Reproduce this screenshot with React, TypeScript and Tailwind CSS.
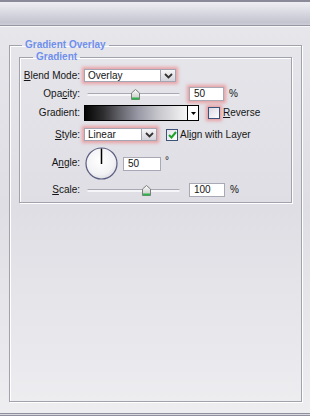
import React from "react";

function Chevron() {
  return (
    <svg width="9" height="6" viewBox="0 0 9 6">
      <path d="M1 1 L4.5 4.5 L8 1" fill="none" stroke="#333" strokeWidth="1.8" />
    </svg>
  );
}

function Select({ value, width }: { value: string; width: string }) {
  return (
    <div
      className={`flex h-[13px] ${width} items-stretch border border-[#a4a4b2] bg-white shadow-[0_0_3px_2px_rgba(238,110,110,0.55)]`}
    >
      <span className="flex-1 pl-[3px] leading-[11px]">{value}</span>
      <span className="flex w-[15px] items-center justify-center border-l border-[#a4a4b2] bg-linear-to-b from-[#f6f6f8] to-[#d4d4dc]">
        <Chevron />
      </span>
    </div>
  );
}

function Slider({ pos }: { pos: number }) {
  return (
    <div className="relative flex h-[13px] w-[96px] items-center pl-[3px]">
      <div className="h-[3px] w-full rounded-full border-t border-[#a9a9b3] bg-[#f6f6f8]" />
      {/* thumb */}
      <svg
        className="absolute top-[1px]"
        style={{ left: pos }}
        width="9"
        height="11"
        viewBox="0 0 9 11"
      >
        <defs>
          <linearGradient id="th" x1="0" y1="0" x2="0" y2="1">
            <stop offset="0" stopColor="#fbfbfb" />
            <stop offset="1" stopColor="#c4c8c4" />
          </linearGradient>
        </defs>
        <path d="M4.5 0.5 L8.5 4 L8.5 10.5 L0.5 10.5 L0.5 4 Z" fill="url(#th)" stroke="#7b7f7b" />
        <rect x="1" y="8.5" width="7" height="2" fill="#2fb24a" />
      </svg>
    </div>
  );
}

function Input({ value, width, glow }: { value: string; width: string; glow?: boolean }) {
  return (
    <div
      className={`flex h-[14px] ${width} items-center border border-[#a9a9b5] bg-white pl-[4px] ${
        glow ? "shadow-[0_0_3px_2px_rgba(238,110,110,0.55)]" : ""
      }`}
    >
      {value}
    </div>
  );
}

function Label({ children }: { children: React.ReactNode }) {
  return <span className="w-[60px] shrink-0 text-right">{children}</span>;
}

export default function App() {
  return (
    <div className="flex h-[416px] w-[310px] flex-col overflow-hidden bg-linear-to-b from-[#e7e7ec] via-[#dedee4] to-[#eeeef1] font-['Liberation_Sans',Arial,sans-serif] text-[10px] leading-[12px] text-[#151515]">
      {/* top bar */}
      <div className="h-[2px] shrink-0 bg-[#8a8a98]" />
      <div className="h-[23px] shrink-0 bg-[linear-gradient(to_bottom,#eeeef2_0%,#e3e3ea_25%,#d2d2dc_60%,#c4c4d0_90%,#cfcfd8_100%)]" />
      <div className="h-[1px] shrink-0 bg-[#9494a3]" />
      <div className="h-[1px] shrink-0 bg-[#f8f8fa]" />

      <div className="flex flex-1 flex-col pb-[11px] pl-[9px] pr-[8px] pt-[12px]">
        <fieldset className="flex-1 border border-[#a2a2ad] px-[9px] shadow-[1px_1px_0_#fff,inset_1px_1px_0_#fff]">
          <legend className="ml-[3px] px-[3px] font-bold text-[#6f8fec]">Gradient Overlay</legend>

          <fieldset className="border border-[#a2a2ad] pb-[5px] shadow-[1px_1px_0_#fff,inset_1px_1px_0_#fff]">
            <legend className="ml-[13px] px-[3px] font-bold text-[#6f8fec]">Gradient</legend>

            <div className="flex flex-col pt-[6px]">
              {/* Blend mode */}
              <div className="flex h-[13px] items-center gap-[4px]">
                <Label>
                  <u>B</u>lend Mode:
                </Label>
                <Select value="Overlay" width="w-[92px]" />
              </div>

              {/* Opacity */}
              <div className="mt-[5px] flex h-[14px] items-center gap-[4px]">
                <Label>
                  Opa<u>c</u>ity:
                </Label>
                <Slider pos={47} />
                <div className="ml-[5px]">
                  <Input value="50" width="w-[35px]" glow />
                </div>
                <span className="ml-[1px]">%</span>
              </div>

              {/* Gradient */}
              <div className="mt-[4px] flex h-[16px] items-center gap-[4px]">
                <Label>Gradient:</Label>
                <div className="flex h-[16px] w-[115px] border border-black">
                  <div className="flex-1 bg-[linear-gradient(to_right,#050505_0%,#2e2e30_18%,#66666e_35%,#9898a6_52%,#c6c6cc_72%,#f6f6f6_100%)]" />
                  <div className="flex w-[11px] items-center justify-center border-l border-black bg-white">
                    <svg width="5" height="3" viewBox="0 0 5 3">
                      <path d="M0 0 H5 L2.5 3 Z" fill="#000" />
                    </svg>
                  </div>
                </div>
                <div className="ml-[5px] h-[12px] w-[12px] border border-[#3c5278] bg-linear-to-br from-[#d9d9e2] to-white shadow-[0_0_3px_2px_rgba(238,110,110,0.55)]" />
                <span className="-ml-[1px]">
                  <u>R</u>everse
                </span>
              </div>

              {/* Style */}
              <div className="mt-[7px] flex h-[13px] items-center gap-[4px]">
                <Label>
                  <u>S</u>tyle:
                </Label>
                <Select value="Linear" width="w-[73px]" />
                <div className="ml-[5px] flex h-[12px] w-[12px] items-center justify-center border border-[#3c5278] bg-linear-to-br from-[#e2e2ea] to-white">
                  <svg width="9" height="8" viewBox="0 0 9 8">
                    <path d="M1 4 L3.5 6.5 L8 1" fill="none" stroke="#1fa12a" strokeWidth="2" />
                  </svg>
                </div>
                <span className="-ml-[2px]">
                  Al<u>i</u>gn with Layer
                </span>
              </div>

              {/* Angle */}
              <div className="mt-[6px] flex h-[32px] items-center gap-[4px]">
                <Label>
                  A<u>n</u>gle:
                </Label>
                <svg className="ml-[1px]" width="33" height="33" viewBox="0 0 33 33">
                  <defs>
                    <radialGradient id="dial" cx="0.45" cy="0.4" r="0.65">
                      <stop offset="0" stopColor="#ffffff" />
                      <stop offset="0.7" stopColor="#f2f2f5" />
                      <stop offset="1" stopColor="#d6d6de" />
                    </radialGradient>
                  </defs>
                  <circle cx="16.5" cy="16.5" r="15.5" fill="url(#dial)" stroke="#5a5d80" strokeWidth="1.2" />
                  <line x1="16.5" y1="17" x2="16.5" y2="1.5" stroke="#000" strokeWidth="1.5" />
                </svg>
                <div className="ml-[1px] mt-[1px]">
                  <Input value="50" width="w-[38px]" />
                </div>
                <span className="-mt-[5px]">°</span>
              </div>

              {/* Scale */}
              <div className="mt-[4px] flex h-[14px] items-center gap-[4px]">
                <Label>
                  <u>S</u>cale:
                </Label>
                <Slider pos={58} />
                <div className="ml-[5px]">
                  <Input value="100" width="w-[36px]" />
                </div>
                <span className="ml-[1px]">%</span>
              </div>
            </div>
          </fieldset>
        </fieldset>
      </div>

      {/* bottom lines */}
      <div className="h-[1px] shrink-0 bg-[#8f8f9d]" />
      <div className="h-[1px] shrink-0 bg-[#d8d8e0]" />
      <div className="h-[1px] shrink-0 bg-[#8f8f9d]" />
    </div>
  );
}
